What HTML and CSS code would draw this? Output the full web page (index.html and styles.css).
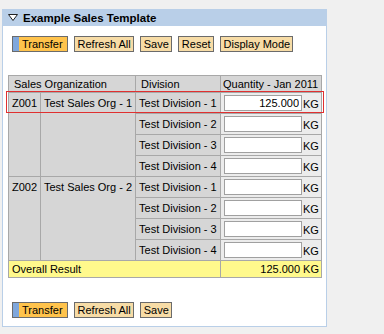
FILE: index.html
```html
<!DOCTYPE html>
<html lang="en">
<head>
  <meta charset="UTF-8">
  <title>Example Sales Template</title>
  <link rel="stylesheet" href="styles.css">
</head>
<body>
  <div class="panel">
    <div class="panel-head">
      <svg class="caret" width="10" height="7" viewBox="0 0 10 7"><path d="M0.5 0.5 L9.5 0.5 L5 6.5 Z" fill="#fff" stroke="#222" stroke-width="1"/></svg>
      <span>Example Sales Template</span>
    </div>
    <div class="panel-body">
      <div class="toolbar">
        <button class="btn primary">Transfer</button>
        <button class="btn">Refresh All</button>
        <button class="btn">Save</button>
        <button class="btn">Reset</button>
        <button class="btn">Display Mode</button>
      </div>

      <div class="grid-wrap">
        <table class="grid">
          <colgroup>
            <col style="width:32px">
            <col style="width:95px">
            <col style="width:85px">
            <col style="width:101px">
          </colgroup>
          <tr class="head">
            <th colspan="2">Sales Organization</th>
            <th>Division</th>
            <th class="qh">Quantity - Jan 2011</th>
          </tr>
          <tr>
            <td rowspan="4" class="key">Z001</td>
            <td rowspan="4" class="key">Test Sales Org - 1</td>
            <td class="div">Test Division - 1</td>
            <td class="qty"><input type="text" value="125.000"><span>KG</span></td>
          </tr>
          <tr>
            <td class="div">Test Division - 2</td>
            <td class="qty"><input type="text"><span>KG</span></td>
          </tr>
          <tr>
            <td class="div">Test Division - 3</td>
            <td class="qty"><input type="text"><span>KG</span></td>
          </tr>
          <tr>
            <td class="div">Test Division - 4</td>
            <td class="qty"><input type="text"><span>KG</span></td>
          </tr>
          <tr>
            <td rowspan="4" class="key">Z002</td>
            <td rowspan="4" class="key">Test Sales Org - 2</td>
            <td class="div">Test Division - 1</td>
            <td class="qty"><input type="text"><span>KG</span></td>
          </tr>
          <tr>
            <td class="div">Test Division - 2</td>
            <td class="qty"><input type="text"><span>KG</span></td>
          </tr>
          <tr>
            <td class="div">Test Division - 3</td>
            <td class="qty"><input type="text"><span>KG</span></td>
          </tr>
          <tr>
            <td class="div">Test Division - 4</td>
            <td class="qty"><input type="text"><span>KG</span></td>
          </tr>
          <tr class="total">
            <td colspan="3">Overall Result</td>
            <td class="num">125.000 KG</td>
          </tr>
        </table>
        <div class="highlight"></div>
      </div>

      <div class="toolbar bottom">
        <button class="btn primary">Transfer</button>
        <button class="btn">Refresh All</button>
        <button class="btn">Save</button>
      </div>
    </div>
  </div>
</body>
</html>
```

FILE: styles.css
```css
body {
  margin: 0;
  background: #f0f0f0;
  font-family: "Liberation Sans", Arial, sans-serif;
  font-size: 11px;
  color: #000;
}
.panel {
  margin: 9px 0 0 2px;
  width: 323px;
  background: #fff;
  border: 1px solid #b9cfe8;
  border-top: 0;
}
.panel-head {
  height: 17px;
  background: #b9cfe8;
  display: flex;
  align-items: center;
  gap: 5px;
  padding-left: 5px;
  font-weight: bold;
  font-size: 11.5px;
}
.caret {
  display: block;
}
.panel-body {
  padding: 10px 5px 8px 5px;
}
.toolbar {
  display: flex;
  gap: 6px;
  padding-left: 4px;
}
.toolbar.bottom {
  margin-top: 24px;
}
.btn {
  height: 16px;
  margin: 0;
  padding: 0 2px 0 3px;
  border: 1px solid #6b6b6b;
  background: #f7dca6;
  font-family: inherit;
  font-size: 11px;
  line-height: 14px;
  color: #000;
}
.btn.primary {
  padding-left: 9px;
  padding-right: 4px;
  background: linear-gradient(to right, #7fa7dc 0, #7fa7dc 6px, #ffc34c 6px);
}
.grid-wrap {
  position: relative;
  margin-top: 23px;
}
.grid {
  border-collapse: collapse;
  table-layout: fixed;
  width: 314px;
}
.grid th,
.grid td {
  border: 1px solid #a8a8a8;
  padding: 0 3px;
  text-align: left;
  vertical-align: top;
  white-space: nowrap;
  overflow: hidden;
}
.grid th {
  background: #d6d6d6;
  font-weight: normal;
  height: 16px;
  line-height: 16px;
  padding: 0 5px;
}
.grid th.qh {
  padding: 0 2px;
}
.grid td.key,
.grid td.div {
  background: #d6d6d6;
  height: 20px;
  line-height: 14px;
  padding-top: 3px;
  padding-bottom: 0;
}
.grid td.div {
  height: 17px;
}
.grid td.qty {
  background: #ececec;
  padding: 2px 0 0 3px;
  height: 18px;
}
.qty input {
  width: 78px;
  height: 16px;
  box-sizing: border-box;
  margin: 0;
  padding: 0 2px;
  border: 1px solid #a0a0a0;
  background: #fff;
  font-family: inherit;
  font-size: 11px;
  text-align: right;
  vertical-align: bottom;
}
.qty span {
  display: inline-block;
  line-height: 14px;
  vertical-align: bottom;
  margin-left: 1px;
}
.grid tr.total td {
  background: #fff98c;
  height: 16px;
  line-height: 16px;
  padding-top: 0;
}
.grid tr.total td.num {
  text-align: right;
  padding-right: 2px;
}
.highlight {
  position: absolute;
  left: -2px;
  top: 16px;
  width: 316px;
  height: 20px;
  border: 1px solid #e03030;
  pointer-events: none;
}
```
